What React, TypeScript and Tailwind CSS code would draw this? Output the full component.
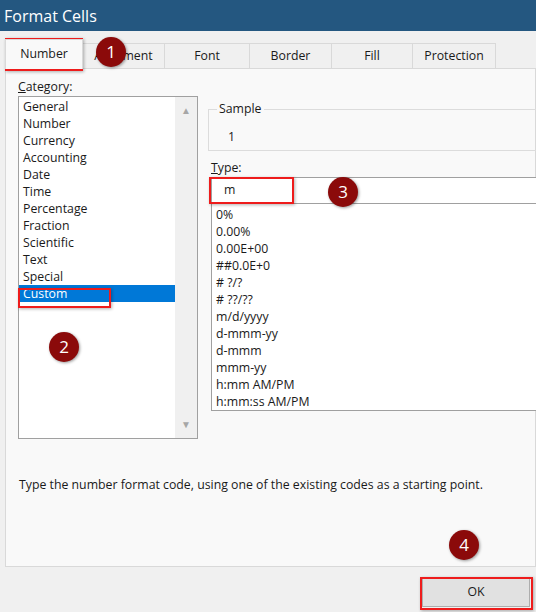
const cats = ["General","Number","Currency","Accounting","Date","Time","Percentage","Fraction","Scientific","Text","Special","Custom"];
const types = ["0%","0.00%","0.00E+00","##0.0E+0","# ?/?","# ??/??","m/d/yyyy","d-mmm-yy","d-mmm","mmm-yy","h:mm AM/PM","h:mm:ss AM/PM"];
const tabs = [["Alignment",82],["Font",85],["Border",82],["Fill",81],["Protection",83]] as const;

function Badge({ n, x, y }: { n: number; x: number; y: number }) {
  return (
    <div className="absolute w-[30px] h-[30px] rounded-full bg-[#8b0a0a] text-white text-[17px] flex items-center justify-center shadow-[1px_1px_3px_rgba(0,0,0,0.4)]" style={{ left: x - 15, top: y - 15 }}>
      {n}
    </div>
  );
}
function Box({ x, y, w, h }: { x: number; y: number; w: number; h: number }) {
  return <div className="absolute border-2 border-[#ee1c1c] shadow-[1px_1px_3px_rgba(0,0,0,0.3)]" style={{ left: x, top: y, width: w, height: h }} />;
}

export default function App() {
  return (
    <div className="relative w-[536px] h-[612px] overflow-hidden bg-[#f0f0f0] text-[12.3px] text-[#1a1a1a]" style={{ fontFamily: '"Segoe UI","Open Sans","Noto Sans",sans-serif' }}>
      <div className="h-[31px] bg-[#245780] text-white text-[16px] pl-[4px] flex items-center">Format Cells</div>
      <div className="pl-[5px] pt-[6px]">
        <div className="flex items-end h-[32px]">
          <div className="w-[78px] h-[30px] bg-[#f9f9f9] border border-b-0 border-[#d9d9d9] flex items-center justify-center relative z-10">Number</div>
          {tabs.map(([t, w]) => (
            <div key={t} className="h-[26px] border border-l-0 border-[#d9d9d9] bg-[#f0f0f0] flex items-center justify-center" style={{ width: w }}>{t}</div>
          ))}
        </div>
        <div className="-mt-px h-[499px] bg-[#f9f9f9] border border-[#d9d9d9] pl-[12px] pt-[10px]">
          <div className="flex gap-[10px]">
            <div className="w-[180px]">
              <div className="h-[17px] leading-[15px]"><span className="underline">C</span>ategory:</div>
              <div className="h-[343px] border border-[#a0a0a0] bg-white flex">
                <div className="flex-1 pt-[1px]">
                  {cats.map(c => (
                    <div key={c} className={`h-[17px] leading-[17px] pl-[4px] ${c === "Custom" ? "bg-[#0078d7] text-white" : ""}`}>{c}</div>
                  ))}
                </div>
                <div className="w-[22px] bg-[#f0f0f0] flex flex-col justify-between items-center py-[6px] text-[#a6a6a6] text-[10px]">
                  <span>▲</span><span>▼</span>
                </div>
              </div>
            </div>
            <div className="flex-1 pt-[30px]">
              <div className="relative h-[42px] border border-[#dcdcdc] -mr-[10px]">
                <span className="absolute -top-[10px] left-[8px] bg-[#f9f9f9] px-[2px]">Sample</span>
                <div className="pl-[19px] pt-[18px]">1</div>
              </div>
              <div className="mt-[8px] ml-[3px] h-[18px]"><span className="underline">T</span>ype:</div>
              <div className="ml-[3px] -mr-[10px] h-[27px] border border-[#a0a0a0] bg-white pl-[12px] flex items-center">m</div>
              <div className="ml-[3px] -mr-[10px] h-[207px] border border-t-0 border-[#a0a0a0] bg-white pl-[4px] pt-[2px]">
                {types.map(t => <div key={t} className="h-[17px] leading-[17px]">{t}</div>)}
              </div>
              <div className="flex justify-end -mr-[10px] mt-[15px]">
                <div className="w-[6px] h-[30px] border border-r-0 border-[#c8c8c8] rounded-l-[3px] bg-[#fdfdfd]" />
              </div>
            </div>
          </div>
          <div className="mt-[20px] ml-[1px]">Type the number format code, using one of the existing codes as a starting point.</div>
        </div>
      </div>
      <div className="flex justify-end pr-[6px] mt-[11px]">
        <div className="w-[108px] h-[29px] border border-[#adadad] bg-[#e1e1e1] flex items-center justify-center">OK</div>
      </div>
      <Box x={5} y={38} w={78} h={33} />
      <Box x={18} y={288} w={93} h={20} />
      <Box x={209} y={177} w={85} h={27} />
      <Box x={420} y={577} w={113} h={33} />
      <Badge n={1} x={111} y={52} />
      <Badge n={2} x={64} y={347} />
      <Badge n={3} x={343} y={192} />
      <Badge n={4} x={464} y={545} />
    </div>
  );
}
